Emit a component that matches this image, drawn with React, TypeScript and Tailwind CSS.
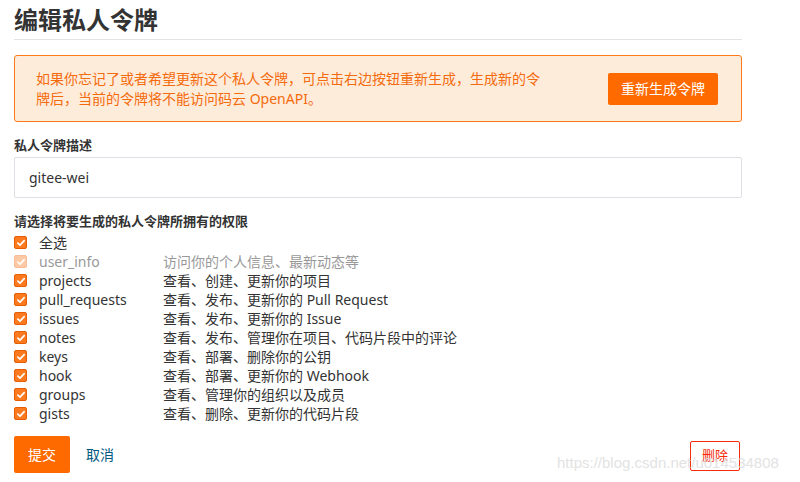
import React from "react";

const perms = [
  { name: "user_info", desc: "访问你的个人信息、最新动态等", disabled: true },
  { name: "projects", desc: "查看、创建、更新你的项目" },
  { name: "pull_requests", desc: "查看、发布、更新你的 Pull Request" },
  { name: "issues", desc: "查看、发布、更新你的 Issue" },
  { name: "notes", desc: "查看、发布、管理你在项目、代码片段中的评论" },
  { name: "keys", desc: "查看、部署、删除你的公钥" },
  { name: "hook", desc: "查看、部署、更新你的 Webhook" },
  { name: "groups", desc: "查看、管理你的组织以及成员" },
  { name: "gists", desc: "查看、删除、更新你的代码片段" },
];

function Check({ faded }: { faded?: boolean }) {
  return (
    <span
      className={`flex h-[13px] w-[13px] shrink-0 items-center justify-center rounded-[2px] border border-[#e85d00] bg-[#fb7a1f] ${
        faded ? "opacity-40" : ""
      }`}
    >
      <svg viewBox="0 0 12 12" className="h-[10px] w-[10px]">
        <path d="M2.2 6.2 L4.8 8.6 L9.8 3.2" fill="none" stroke="white" strokeWidth="2" strokeLinecap="round" strokeLinejoin="round" />
      </svg>
    </span>
  );
}

export default function App() {
  return (
    <div
      className="relative h-[482px] w-[800px] overflow-hidden bg-white text-[#333]"
      style={{ fontFamily: '"Noto Sans", "Noto Sans CJK SC", sans-serif' }}
    >
      <div className="ml-[14px] w-[728px] pt-[3px]">
        <h1 className="text-[24px] font-bold leading-[33px] text-[#333]">编辑私人令牌</h1>
        <div className="mt-[3px] border-b border-[#e3e3e3]" />

        <div className="mt-[15px] flex h-[67px] items-center justify-between rounded-[3px] border border-[#ff7a1a] bg-[#feecdb] pl-[21px] pr-[23px]">
          <p className="w-[512px] text-[14px] leading-[20px] text-[#f46b0d]">
            如果你忘记了或者希望更新这个私人令牌，可点击右边按钮重新生成，生成新的令牌后，当前的令牌将不能访问码云 OpenAPI。
          </p>
          <button className="h-[32px] w-[110px] rounded-[2px] bg-[#ff6a00] text-[14px] text-white">
            重新生成令牌
          </button>
        </div>

        <div className="mt-[14px] text-[13px] font-bold leading-[18px] text-[#333]">私人令牌描述</div>
        <div className="mt-[3px] flex h-[41px] items-center rounded-[2px] border border-[#dcdfe3] px-[14px] text-[14px] text-[#333]">
          gitee-wei
        </div>

        <div className="mt-[14px] text-[13px] font-bold leading-[18px] text-[#333]">请选择将要生成的私人令牌所拥有的权限</div>
        <div className="mt-[3px] flex flex-col">
          <label className="flex h-[19px] items-center text-[14px] text-[#333]">
            <Check />
            <span className="ml-[12px]">全选</span>
          </label>
          {perms.map((p) => (
            <label key={p.name} className={`flex h-[19px] items-center text-[14px] ${p.disabled ? "text-[#999]" : "text-[#333]"}`}>
              <Check faded={p.disabled} />
              <span className="ml-[12px] w-[124px]">{p.name}</span>
              <span>{p.desc}</span>
            </label>
          ))}
        </div>

        <div className="mt-[13px] flex items-center">
          <button className="h-[37px] w-[56px] rounded-[2px] bg-[#ff6a00] text-[14px] text-white">提交</button>
          <a className="ml-[16px] text-[14px] text-[#005980]">取消</a>
          <button className="ml-auto mr-[2px] mt-[3px] h-[30px] w-[50px] rounded-[2px] border border-[#f52b0b] bg-white text-[13px] text-[#f52b0b]">
            删除
          </button>
        </div>
      </div>

      <div
        className="pointer-events-none absolute left-[557px] top-[452px] text-[15px] text-[#dcdcdc] opacity-80"
        style={{ fontFamily: '"Liberation Sans", Arial, sans-serif' }}
      >
        https://blog.csdn.net/u014534808
      </div>
    </div>
  );
}
